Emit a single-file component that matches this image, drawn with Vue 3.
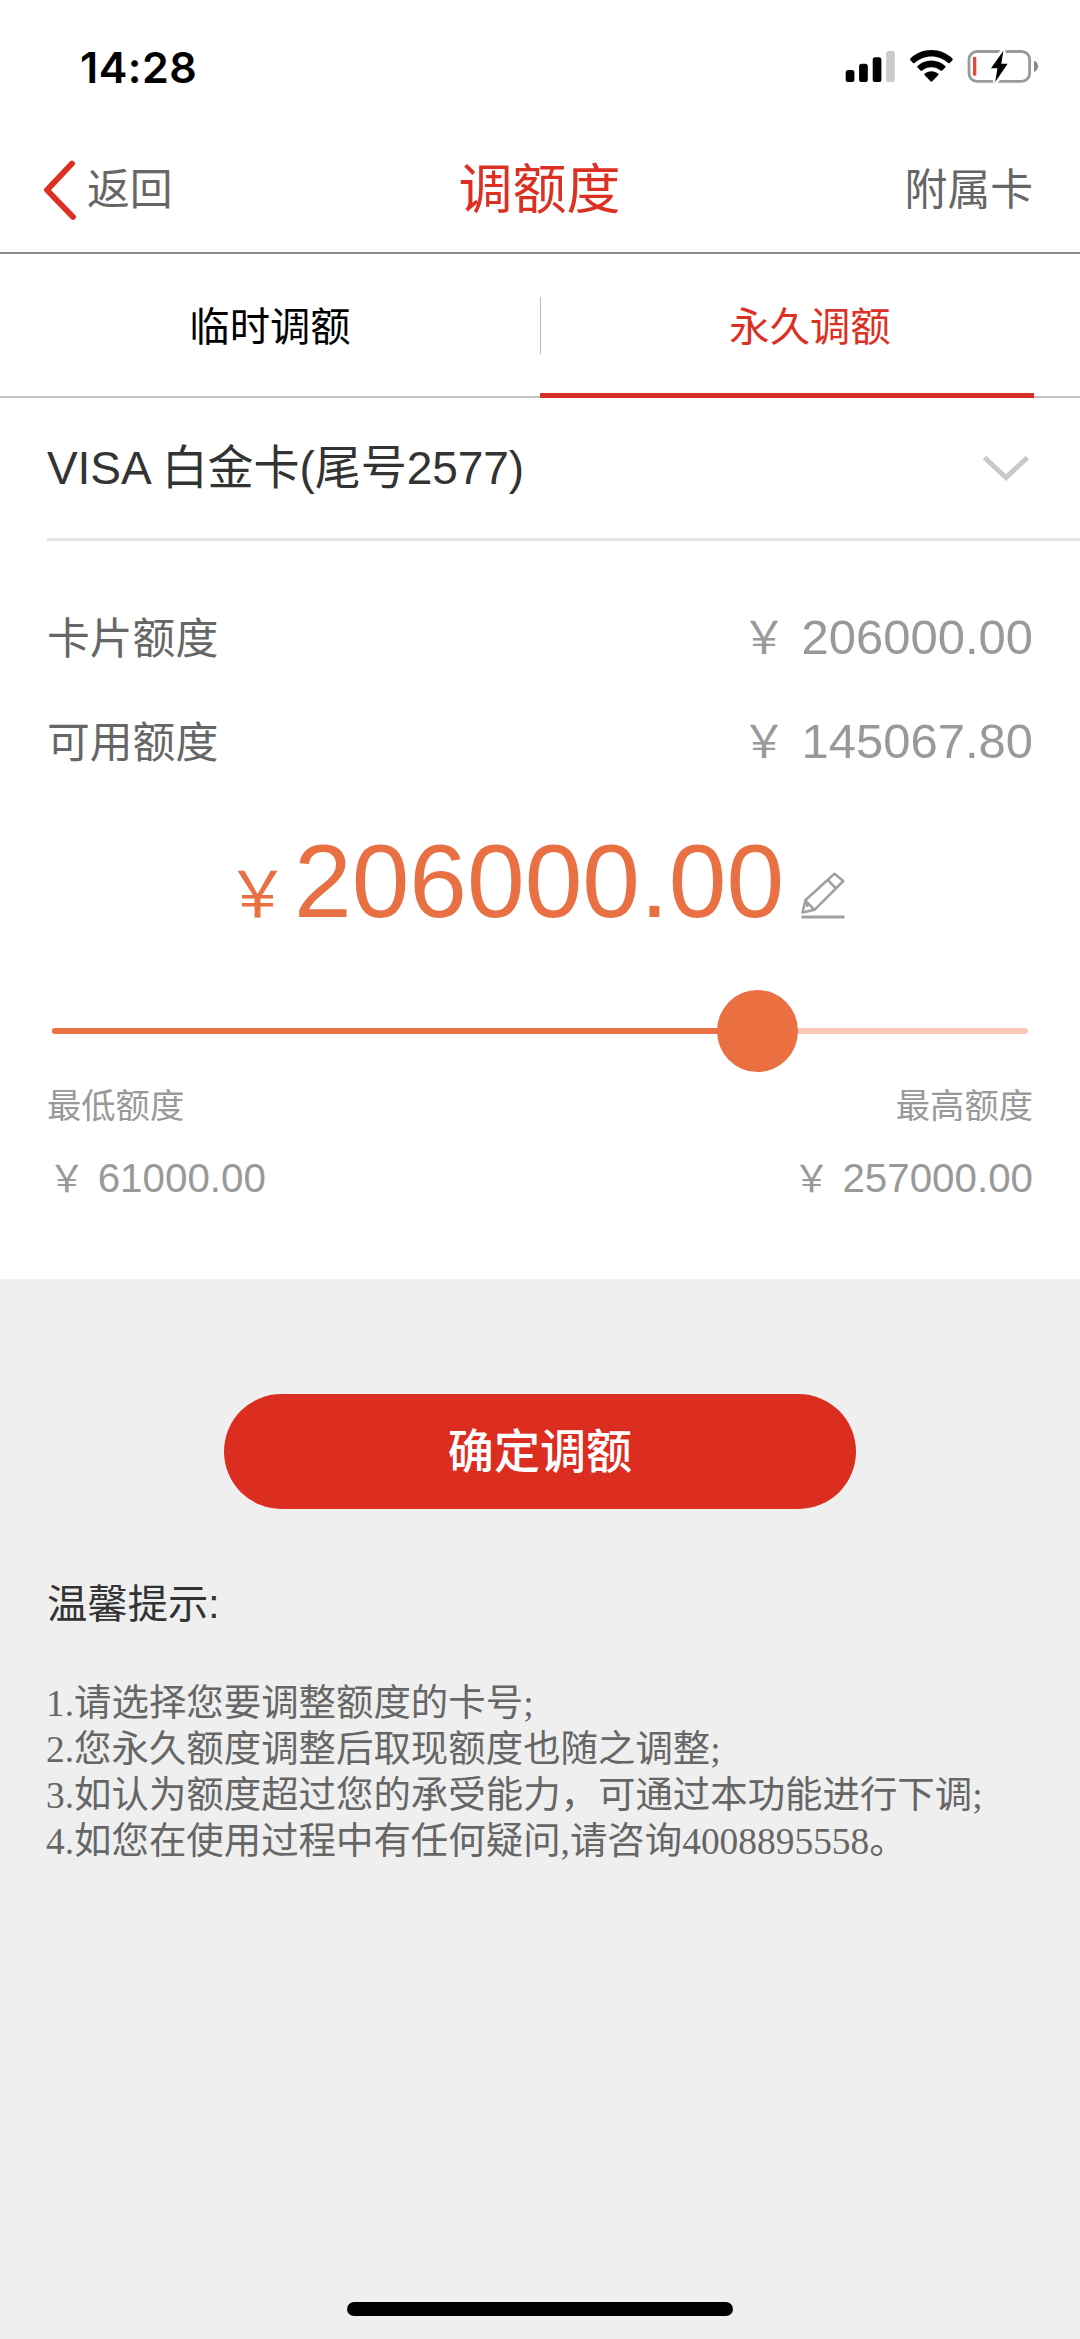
<script setup>
import { ref, computed } from 'vue'

const tabs = ['临时调额', '永久调额']
const activeTab = ref(1)
const limits = [
  { label: '卡片额度', value: '206000.00' },
  { label: '可用额度', value: '145067.80' },
]
const min = 61000
const max = 257000
const amount = ref(206000)
const percent = computed(() => ((amount.value - min) / (max - min)) * 100)
const tips = [
  '1.请选择您要调整额度的卡号;',
  '2.您永久额度调整后取现额度也随之调整;',
  '3.如认为额度超过您的承受能力，可通过本功能进行下调;',
  '4.如您在使用过程中有任何疑问,请咨询4008895558。',
]
</script>

<template>
  <div class="page">
    <header class="status">
      <span class="time">14:28</span>
      <svg class="status-icons" width="194" height="34" viewBox="845 50 194 34">
        <g>
          <rect x="845.7" y="70" width="8.7" height="12" rx="2.6" />
          <rect x="859.1" y="63.7" width="8.7" height="18.3" rx="2.6" />
          <rect x="872.7" y="57.3" width="8.7" height="24.7" rx="2.6" />
          <rect x="886.1" y="51" width="8.7" height="31" rx="2.6" fill="#cbcbcb" />
        </g>
        <path d="M931.4 50C939.6 50 947 53.2 952.4 58.5Q953.2 59.4 952.4 60.2L949.7 62.9Q948.9 63.6 948.1 62.9C943.7 58.8 937.9 56.4 931.4 56.4S919.1 58.8 914.7 62.9Q913.9 63.6 913.1 62.9L910.4 60.2Q909.6 59.4 910.4 58.5C915.8 53.2 923.2 50 931.4 50Z" />
        <path d="M931.4 60.5C936.9 60.5 941.7 62.6 945.3 66Q946 66.8 945.3 67.6L942.2 70.6Q941.4 71.3 940.6 70.6C938.1 68.4 935 67.2 931.4 67.2S924.7 68.4 922.2 70.6Q921.4 71.3 920.6 70.6L917.5 67.6Q916.8 66.8 917.5 66C921.1 62.6 925.9 60.5 931.4 60.5Z" />
        <path d="M931.4 71.2C934 71.2 936.3 72.1 938.1 73.6Q938.9 74.4 938.1 75.2L932.3 81.2Q931.4 82.1 930.5 81.2L924.7 75.2Q923.9 74.4 924.7 73.6C926.5 72.1 928.8 71.2 931.4 71.2Z" />
        <rect x="969" y="51.5" width="60.600" height="29.8" rx="8" fill="none" stroke="#999" stroke-width="2.8" />
        <path d="M1034 60.700C1036.6 61.5 1038 63.6 1038 66.3S1036.6 71.1 1034 72Z" fill="#888" />
        <rect x="973" y="56.700" width="3.3" height="19" rx="1.2" fill="#e8443c" />
        <path d="M1003.4 50.2L991 68.2H997.4L995.2 82.3L1007.7 63.8H1001.3Z" stroke="#fff" stroke-width="5" />
        <path d="M1003.4 50.7L991 68.2H997.4L995.2 82L1007.7 63.8H1001.3Z" />
      </svg>
    </header>

    <nav class="nav">
      <div class="back">
        <svg width="36" height="62" viewBox="0 0 36 62">
          <path d="M31 4.500L6 31L32 58" fill="none" stroke="#dc3023" stroke-width="5.8" stroke-linecap="round" stroke-linejoin="round" />
        </svg>
        <span>返回</span>
      </div>
      <h1>调额度</h1>
      <span class="sub-card">附属卡</span>
    </nav>

    <div class="tabs">
      <div
        v-for="(tab, i) in tabs"
        :key="tab"
        class="tab"
        :class="{ active: i === activeTab }"
        @click="activeTab = i"
      >
        {{ tab }}
      </div>
    </div>

    <main class="panel">
      <div class="card-select">
        <span>VISA 白金卡(尾号2577)</span>
        <svg width="50" height="30" viewBox="0 0 50 30">
          <path d="M3.5 4.500L25 24.500L46.5 4.500" fill="none" stroke="#c8c8c8" stroke-width="5" />
        </svg>
      </div>

      <div class="limits">
        <div v-for="item in limits" :key="item.label" class="limit">
          <span class="limit-label">{{ item.label }}</span>
          <span class="limit-value"><i class="sign"><b>￥</b></i> {{ item.value }}</span>
        </div>
      </div>

      <div class="amount">
        <i class="sign yen"><b>￥</b></i>
        <span class="number">{{ amount.toFixed(2) }}</span>
        <svg class="pencil" width="44" height="48" viewBox="0 0 44 48">
          <g fill="none" stroke="#a0a0a0" stroke-width="2.5" stroke-linejoin="round">
            <path d="M1.500 40.500L4.300 28.300L33.500 1.800L42.300 9L13.500 37.800Z" />
            <path d="M26.700 7.800L34.800 16.400M4.300 28.300L13.500 37.800M5 30L6.500 35" />
          </g>
          <rect x="0.5" y="43.500" width="43" height="3" fill="#a0a0a0" />
        </svg>
      </div>

      <div class="slider">
        <div class="track"><div class="fill" :style="{ width: percent + '%' }"></div></div>
        <div class="thumb"></div>
      </div>

      <div class="range range-label"><span>最低额度</span><span>最高额度</span></div>
      <div class="range range-value">
        <span><i class="sign"><b>￥</b></i> {{ min.toFixed(2) }}</span>
        <span><i class="sign"><b>￥</b></i> {{ max.toFixed(2) }}</span>
      </div>
    </main>

    <button class="submit">确定调额</button>

    <section class="tips">
      <h2>温馨提示:</h2>
      <p v-for="tip in tips" :key="tip">{{ tip }}</p>
    </section>

    <div class="home-bar"></div>
  </div>
</template>

<style>
body {
  margin: 0;
}
</style>

<style scoped>
* {
  box-sizing: border-box;
}
.page {
  width: 1080px;
  height: 2339px;
  display: flex;
  flex-direction: column;
  background: #efefef;
  font-family: 'Liberation Sans', 'Noto Sans CJK SC', sans-serif;
  color: #333;
  white-space: nowrap;
  overflow: hidden;
}
.status {
  height: 128px;
  flex: none;
  display: flex;
  align-items: center;
  justify-content: space-between;
  padding: 5px 41px 0 80px;
  background: #fff;
  color: #000;
}
.time {
  font: 600 43px/50px Inter, sans-serif;
  letter-spacing: 0.5px;
}
.nav {
  height: 126px;
  flex: none;
  display: grid;
  grid-template-columns: 1fr auto 1fr;
  align-items: center;
  padding: 0 47px 0 41px;
  border-bottom: 2px solid #8a8a8a;
  background: #fff;
  font-size: 42.8px;
  line-height: 64px;
  color: #666;
}
.back {
  display: flex;
  align-items: center;
  gap: 10px;
}
.nav h1 {
  margin: 0;
  padding-left: 5px;
  font-size: 54px;
  font-weight: 400;
  line-height: 64px;
  color: #dc3023;
}
.sub-card {
  justify-self: end;
}
.tabs {
  position: relative;
  height: 144px;
  flex: none;
  display: flex;
  border-bottom: 2px solid #c4c4c4;
  background: #fff;
}
.tabs::before {
  content: '';
  position: absolute;
  left: 540px;
  top: 43px;
  width: 1px;
  height: 57px;
  background: #bbb;
}
.tabs::after {
  content: '';
  position: absolute;
  left: 540px;
  bottom: -2px;
  width: 494px;
  height: 5px;
  background: #d63028;
}
.tab {
  flex: 1;
  display: flex;
  align-items: center;
  justify-content: center;
  padding-top: 3px;
  font-size: 40.32px;
  line-height: 56px;
  color: #000;
}
.tab.active {
  color: #dc3023;
}
.panel {
  height: 881px;
  flex: none;
  background: #fff;
}
.card-select {
  height: 143px;
  display: flex;
  align-items: center;
  justify-content: space-between;
  margin-left: 47px;
  padding-right: 49px;
  border-bottom: 3px solid #e4e4e4;
  font-size: 46.08px;
  line-height: 64px;
  letter-spacing: -0.12px;
}
.limits {
  padding: 45px 47px 0;
}
.limit {
  height: 104px;
  display: flex;
  align-items: center;
  justify-content: space-between;
}
.limit-label {
  padding-top: 1px;
  font-size: 42.8px;
  line-height: 60px;
  color: #666;
}
.limit-value {
  font-size: 48.96px;
  line-height: 60px;
  color: #999;
}
/* currency sign: slightly reduced glyph centred in a full em cell */
.sign {
  display: inline-block;
  width: 0.98em;
  text-align: center;
  font-style: normal;
}
.sign b {
  font-size: 0.92em;
  font-weight: 400;
}
.amount {
  height: 120px;
  margin-top: 27px;
  padding-left: 223px;
  display: flex;
  align-items: baseline;
  line-height: 120px;
  color: #e97043;
}
.yen {
  width: 69px;
  font-size: 69.12px;
}
.number {
  margin-left: 2px;
  font-size: 103.68px;
}
.pencil {
  margin-left: 17px;
  transform: translateY(3px);
}
.slider {
  position: relative;
  height: 82px;
  margin: 49px 52px 0;
  display: flex;
  align-items: center;
}
.track {
  width: 100%;
  height: 6px;
  border-radius: 3px;
  background: #fbc5b7;
  overflow: hidden;
}
.fill {
  height: 100%;
  background: #ec7046;
}
.thumb {
  position: absolute;
  left: 665px;
  top: 0;
  width: 81px;
  height: 82px;
  border-radius: 50%;
  background: #ea7042;
}
.range {
  height: 46px;
  display: flex;
  justify-content: space-between;
  padding: 0 47px;
  line-height: 46px;
  color: #999;
}
.range-label {
  margin-top: 11px;
  font-size: 34.3px;
}
.range-value {
  margin-top: 26px;
  font-size: 40.32px;
}
.submit {
  width: 632px;
  height: 115px;
  flex: none;
  align-self: center;
  margin-top: 115px;
  padding: 0;
  border: 0;
  border-radius: 58px;
  background: #dc2d21;
  color: #fff;
  font: 500 46.08px/60px 'Liberation Sans', 'Noto Sans CJK SC', sans-serif;
}
.tips {
  padding: 72px 46px 0;
}
.tips h2 {
  margin: 0 0 54px 1px;
  font-size: 40.32px;
  font-weight: 400;
  line-height: 46px;
}
.tips p {
  margin: 0;
  font-family: 'Liberation Serif', 'Noto Sans CJK SC', serif;
  font-size: 37.44px;
  line-height: 46px;
  color: #666;
}
.home-bar {
  width: 386px;
  height: 14px;
  flex: none;
  align-self: center;
  margin: auto 0 23px;
  border-radius: 7px;
  background: #000;
}
</style>
